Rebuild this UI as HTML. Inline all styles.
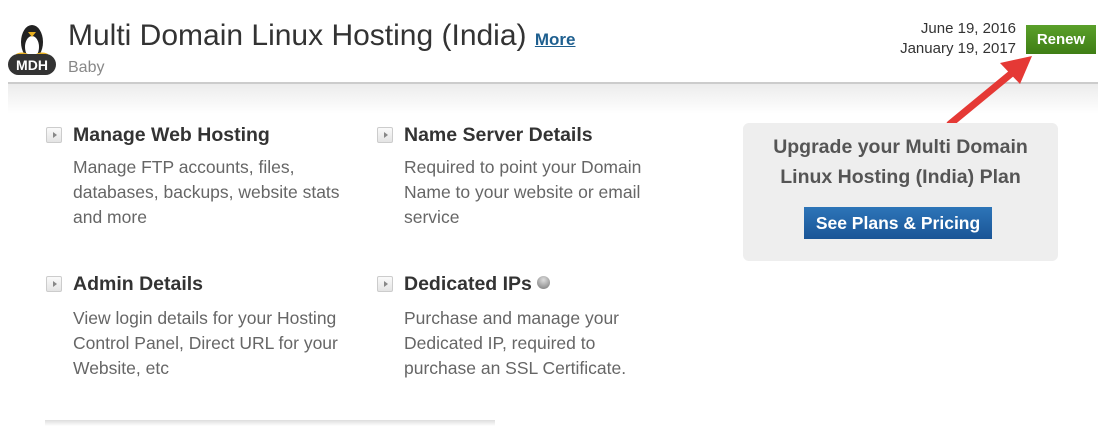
<!DOCTYPE html>
<html><head><style>
*{margin:0;padding:0;box-sizing:border-box}
body{width:1111px;height:428px;background:#fff;font-family:"Liberation Sans",Arial,sans-serif;position:relative;overflow:hidden}
.a{position:absolute;white-space:nowrap}
.h{font-size:19.5px;font-weight:bold;color:#333}
.d{font-size:17.5px;color:#666;line-height:25px}
.ic{position:absolute;width:16px;height:16px;border:1px solid #ccc;background:linear-gradient(#fafafa,#e4e4e4);border-radius:2px}
.ic:after{content:"";position:absolute;left:6px;top:4px;border-left:4px solid #888;border-top:3px solid transparent;border-bottom:3px solid transparent}
</style></head><body>
<svg class="a" style="left:6px;top:18px" width="52" height="58" viewBox="0 0 52 58">
<ellipse cx="26" cy="24" rx="11" ry="17" fill="#222"/>
<ellipse cx="26" cy="29" rx="7" ry="11" fill="#fff"/>
<path d="M22 14 L30 14 L26 19Z" fill="#e8b020"/>
<ellipse cx="16" cy="38" rx="7" ry="3.5" fill="#e8b020"/>
<ellipse cx="36" cy="38" rx="7" ry="3.5" fill="#e8b020"/>
<rect x="2" y="36" width="48" height="21" rx="10.5" fill="#333"/>
<text x="26" y="52" font-family="Liberation Sans" font-weight="bold" font-size="14" fill="#fff" text-anchor="middle">MDH</text>
</svg>
<div class="a" style="left:68px;top:19px;font-size:30px;color:#333">Multi Domain Linux Hosting (India) <span style="font-size:17px;font-weight:bold;color:#1e5f8f;text-decoration:underline">More</span></div>
<div class="a" style="left:68px;top:59px;font-size:16px;color:#888">Baby</div>
<div class="a" style="right:95px;top:19px;font-size:15px;color:#333;text-align:right;line-height:20px">June 19, 2016<br>January 19, 2017</div>
<div class="a" style="left:1026px;top:25px;width:70px;height:29px;background:linear-gradient(#5aa02a,#3f7e15);color:#fff;font-weight:bold;font-size:15px;text-align:center;line-height:29px">Renew</div>
<div class="a" style="left:8px;top:82px;width:1090px;height:2px;background:#ccc"></div>
<div class="a" style="left:8px;top:84px;width:1090px;height:30px;background:linear-gradient(#ececec,#fff)"></div>
<svg class="a" style="left:940px;top:48px" width="100" height="85"><line x1="10" y1="76" x2="78" y2="20" stroke="#e53935" stroke-width="7" stroke-linecap="round"/><path d="M92 8 L60 15 L80 36Z" fill="#e53935"/></svg>

<div class="ic" style="left:46px;top:127px"></div>
<div class="a h" style="left:73px;top:124px">Manage Web Hosting</div>
<div class="a d" style="left:73px;top:155px">Manage FTP accounts, files,<br>databases, backups, website stats<br>and more</div>
<div class="ic" style="left:377px;top:127px"></div>
<div class="a h" style="left:404px;top:124px">Name Server Details</div>
<div class="a d" style="left:404px;top:155px">Required to point your Domain<br>Name to your website or email<br>service</div>
<div class="ic" style="left:46px;top:276px"></div>
<div class="a h" style="left:73px;top:273px">Admin Details</div>
<div class="a d" style="left:73px;top:306px">View login details for your Hosting<br>Control Panel, Direct URL for your<br>Website, etc</div>
<div class="ic" style="left:377px;top:276px"></div>
<div class="a h" style="left:404px;top:273px">Dedicated IPs <span style="display:inline-block;width:13px;height:13px;border-radius:50%;background:radial-gradient(circle at 50% 30%,#ddd,#777);vertical-align:1px"></span></div>
<div class="a d" style="left:404px;top:306px">Purchase and manage your<br>Dedicated IP, required to<br>purchase an SSL Certificate.</div>

<div class="a" style="left:743px;top:123px;width:315px;height:138px;background:#eee;border-radius:6px"></div>
<div class="a" style="left:743px;top:132px;width:315px;text-align:center;font-size:19.5px;font-weight:bold;color:#555;line-height:30px">Upgrade your Multi Domain<br>Linux Hosting (India) Plan</div>
<div class="a" style="left:804px;top:207px;width:188px;height:32px;background:linear-gradient(#2d75b8,#1a5596);color:#fff;font-weight:bold;font-size:17.5px;text-align:center;line-height:32px">See Plans &amp; Pricing</div>
<div class="a" style="left:45px;top:420px;width:450px;height:6px;background:linear-gradient(#ddd,#fff)"></div>
</body></html>
